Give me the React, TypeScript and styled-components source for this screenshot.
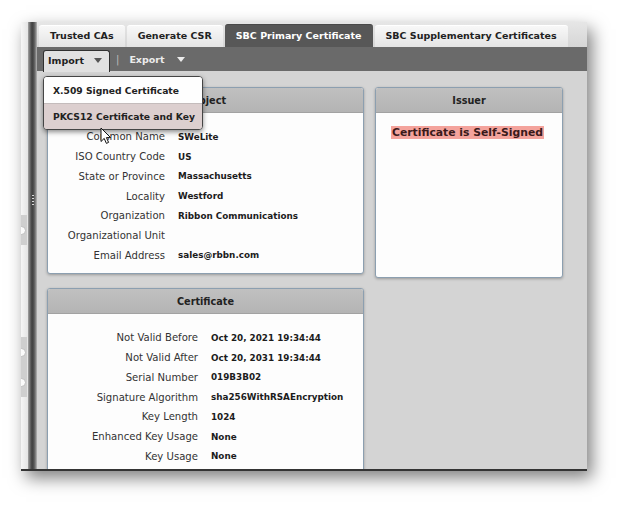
import React from "react";
import styled, { createGlobalStyle } from "styled-components";

const Global = createGlobalStyle`
  html, body { margin: 0; padding: 0; background: #ffffff; }
  body { font-family: "DejaVu Sans", Verdana, sans-serif; -webkit-font-smoothing: antialiased; }
  * { box-sizing: border-box; }
`;

const Page = styled.div`
  width: 629px;
  height: 513px;
  padding: 22px 0 0 21px;
  background: #ffffff;
  overflow: hidden;
`;

const Window = styled.div`
  position: relative;
  width: 566px;
  height: 449px;
  display: flex;
  background: #d4d4d4;
  border-bottom: 2px solid #343434;
  box-shadow: 5px 7px 16px rgba(0, 0, 0, 0.5);
  overflow: hidden;
`;

const LeftStrip = styled.div`
  width: 7px;
  flex: none;
  display: flex;
  flex-direction: column;
  background: linear-gradient(to right, #f6f6f6, #e4e4e4);
`;

const KnobBlock = styled.div<{ $top: number; $h: number }>`
  margin-top: ${(p) => p.$top}px;
  height: ${(p) => p.$h}px;
  width: 6px;
  background: #cfcfcf;
  display: flex;
  flex-direction: column;
  justify-content: space-around;
  overflow: hidden;
`;

const Knob = styled.div`
  width: 9px;
  height: 9px;
  margin-left: -4px;
  border-radius: 50%;
  background: #fbfbfb;
  border: 1px solid #bdbdbd;
`;

const Splitter = styled.div`
  width: 9px;
  flex: none;
  display: flex;
  flex-direction: column;
  align-items: center;
  background: linear-gradient(
    to right,
    #a4a4a4 0px,
    #6c6c6c 2px,
    #3f3f3f 4px,
    #555555 6px,
    #8e8e8e 8px,
    #bdbdbd 9px
  );
`;

const Grip = styled.div`
  margin-top: 173px;
  display: flex;
  flex-direction: column;
  gap: 2px;
  & > span {
    width: 2px;
    height: 1px;
    background: #d8d8d8;
  }
`;

const Main = styled.div`
  flex: 1;
  min-width: 0;
  display: flex;
  flex-direction: column;
`;

const TabBar = styled.div`
  height: 25px;
  flex: none;
  display: flex;
  align-items: flex-end;
  gap: 2px;
  padding-left: 2px;
  background: linear-gradient(#e6e6e6, #d6d6d6);
`;

const Tab = styled.div<{ $active?: boolean }>`
  height: ${(p) => (p.$active ? 23 : 22)}px;
  padding: 0 11px 2px;
  display: flex;
  align-items: center;
  font-weight: bold;
  font-size: 9.5px;
  white-space: nowrap;
  border-radius: 3px 3px 0 0;
  color: ${(p) => (p.$active ? "#ffffff" : "#222222")};
  background: ${(p) =>
    p.$active ? "#575757" : "linear-gradient(#f8f8f8, #e4e4e4)"};
  border-top: 1px solid ${(p) => (p.$active ? "#4a4a4a" : "#ffffff")};
`;

const Toolbar = styled.div`
  height: 24px;
  flex: none;
  display: flex;
  align-items: flex-end;
  padding-left: 6px;
  background: #6a6a6a;
`;

const MenuWrap = styled.div`
  position: relative;
  align-self: flex-end;
`;

const MenuButton = styled.div`
  width: 67px;
  height: 22px;
  margin-bottom: -1px;
  padding: 0 0 3px 4px;
  display: flex;
  align-items: center;
  gap: 10px;
  background: #e1e1e1;
  border: 1px solid #303030;
  border-bottom: none;
  border-radius: 3px 3px 0 0;
  font-weight: bold;
  font-size: 9.5px;
  color: #1e1e1e;
`;

const ToolLink = styled.div`
  align-self: center;
  display: flex;
  align-items: center;
  gap: 12px;
  margin-left: 10px;
  font-weight: bold;
  font-size: 9.5px;
  color: #ececec;
`;

const Sep = styled.span`
  align-self: center;
  margin-left: 6px;
  color: #bdbdbd;
  font-size: 10px;
`;

const Caret = styled.span<{ $color: string }>`
  width: 0;
  height: 0;
  border-left: 4px solid transparent;
  border-right: 4px solid transparent;
  border-top: 5px solid ${(p) => p.$color};
`;

const Menu = styled.div`
  position: absolute;
  left: 0;
  top: 26px;
  width: 160px;
  z-index: 5;
  background: #ffffff;
  border: 1px solid #454545;
  border-radius: 4px;
  box-shadow: 0 2px 5px rgba(0, 0, 0, 0.45);
  overflow: hidden;
`;

const MenuItem = styled.div<{ $hover?: boolean }>`
  height: 26px;
  padding-left: 9px;
  display: flex;
  align-items: center;
  font-weight: bold;
  font-size: 9.2px;
  white-space: nowrap;
  color: #222222;
  background: ${(p) => (p.$hover ? "#dccfcf" : "#fefefe")};
  & + & {
    border-top: 1px solid #c4bcbc;
  }
`;

const Content = styled.div`
  flex: 1;
  display: grid;
  grid-template-columns: 317px 188px;
  column-gap: 11px;
  row-gap: 10px;
  align-items: start;
  align-content: start;
  padding: 16px 0 0 10px;
`;

const Panel = styled.div<{ $height?: number }>`
  background: #fdfdfd;
  border: 1px solid #8c9fb0;
  border-radius: 3px;
  box-shadow: 0 1px 3px rgba(0, 0, 0, 0.28);
  overflow: hidden;
  ${(p) => (p.$height ? `height: ${p.$height}px;` : "")}
`;

const PanelHeader = styled.div`
  height: 25px;
  display: flex;
  align-items: center;
  justify-content: center;
  background: linear-gradient(#c0c0c0, #b4b4b4);
  border-bottom: 1px solid #a2a2a2;
  font-weight: bold;
  font-size: 9.7px;
  color: #222222;
`;

const FieldGrid = styled.div<{ $labelWidth: number }>`
  display: grid;
  grid-template-columns: ${(p) => p.$labelWidth}px 1fr;
  grid-auto-rows: 19.75px;
  column-gap: 13px;
  align-items: center;
  padding: 14px 0 8px;
`;

const Label = styled.div`
  text-align: right;
  font-size: 10.1px;
  color: #333333;
  white-space: nowrap;
`;

const Value = styled.div`
  font-weight: bold;
  font-size: 8.8px;
  color: #1c1c1c;
  white-space: nowrap;
`;

const IssuerBody = styled.div`
  padding: 8px 15px;
`;

const Warn = styled.span`
  display: inline-block;
  padding: 1px;
  line-height: 11px;
  background: #f4a39c;
  color: #3a1a1a;
  font-weight: bold;
  font-size: 10.8px;
  white-space: nowrap;
`;

const Cursor = styled.svg`
  position: absolute;
  left: 79px;
  top: 105px;
  z-index: 6;
`;

const subjectRows: [string, string][] = [
  ["Common Name", "SWeLite"],
  ["ISO Country Code", "US"],
  ["State or Province", "Massachusetts"],
  ["Locality", "Westford"],
  ["Organization", "Ribbon Communications"],
  ["Organizational Unit", ""],
  ["Email Address", "sales@rbbn.com"],
];

const certRows: [string, string][] = [
  ["Not Valid Before", "Oct 20, 2021 19:34:44"],
  ["Not Valid After", "Oct 20, 2031 19:34:44"],
  ["Serial Number", "019B3B02"],
  ["Signature Algorithm", "sha256WithRSAEncryption"],
  ["Key Length", "1024"],
  ["Enhanced Key Usage", "None"],
  ["Key Usage", "None"],
];

function Fields({ rows, labelWidth }: { rows: [string, string][]; labelWidth: number }) {
  return (
    <FieldGrid $labelWidth={labelWidth}>
      {rows.map(([l, v]) => (
        <React.Fragment key={l}>
          <Label>{l}</Label>
          <Value>{v}</Value>
        </React.Fragment>
      ))}
    </FieldGrid>
  );
}

export default function App() {
  return (
    <Page>
      <Global />
      <Window>
        <LeftStrip>
          <KnobBlock $top={193} $h={30}>
            <Knob />
          </KnobBlock>
          <KnobBlock $top={92} $h={60}>
            <Knob />
            <Knob />
          </KnobBlock>
        </LeftStrip>
        <Splitter>
          <Grip>
            <span />
            <span />
            <span />
            <span />
          </Grip>
        </Splitter>
        <Main>
          <TabBar>
            <Tab>Trusted CAs</Tab>
            <Tab>Generate CSR</Tab>
            <Tab $active>SBC Primary Certificate</Tab>
            <Tab>SBC Supplementary Certificates</Tab>
          </TabBar>
          <Toolbar>
            <MenuWrap>
              <MenuButton>
                Import <Caret $color="#555555" />
              </MenuButton>
              <Menu>
                <MenuItem>X.509 Signed Certificate</MenuItem>
                <MenuItem $hover>PKCS12 Certificate and Key</MenuItem>
              </Menu>
            </MenuWrap>
            <Sep>|</Sep>
            <ToolLink>
              Export <Caret $color="#ececec" />
            </ToolLink>
          </Toolbar>
          <Content>
            <Panel>
              <PanelHeader>Subject</PanelHeader>
              <Fields rows={subjectRows} labelWidth={117} />
            </Panel>
            <Panel $height={191}>
              <PanelHeader>Issuer</PanelHeader>
              <IssuerBody>
                <Warn>Certificate is Self-Signed</Warn>
              </IssuerBody>
            </Panel>
            <Panel $height={230}>
              <PanelHeader>Certificate</PanelHeader>
              <Fields rows={certRows} labelWidth={150} />
            </Panel>
          </Content>
        </Main>
        <Cursor width="12" height="18" viewBox="0 0 12 18">
          <path
            d="M1 1 L1 14.5 L4.2 11.4 L6.4 16.4 L8.6 15.4 L6.4 10.6 L10.6 10.6 Z"
            fill="#ffffff"
            stroke="#111111"
            strokeWidth="1"
            strokeLinejoin="round"
          />
        </Cursor>
      </Window>
    </Page>
  );
}
